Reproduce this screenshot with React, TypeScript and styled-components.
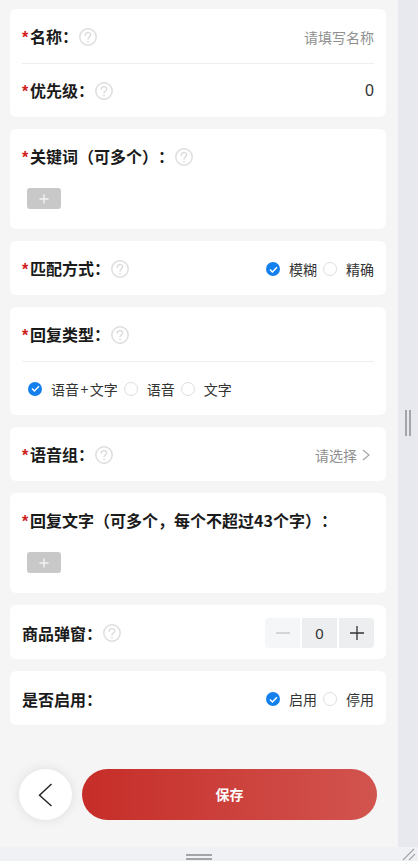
import React from "react";
import styled, { createGlobalStyle } from "styled-components";

const Global = createGlobalStyle`
  html, body { margin: 0; padding: 0; background: #f5f5f6; }
  body {
    font-family: "Noto Sans CJK SC", "Noto Sans", sans-serif;
    color: #1a1a1a;
    text-spacing-trim: space-all;
  }
  * { box-sizing: border-box; }
`;

const Frame = styled.div`
  width: 418px;
  height: 861px;
  display: flex;
  flex-direction: column;
  overflow: hidden;
`;
const Upper = styled.div`
  flex: 1;
  display: flex;
  min-height: 0;
`;
const Main = styled.main`
  width: 398px;
  padding: 9px 12px 0 10px;
  background: #f5f5f6;
  display: flex;
  flex-direction: column;
  gap: 12px;
`;
const SideStrip = styled.div`
  width: 20px;
  background: #e8e9ef;
  display: flex;
  align-items: center;
  justify-content: center;
`;
const VGrip = styled.div`
  width: 6px;
  height: 26px;
  margin-bottom: 1px;
  border-left: 2px solid #a3a4a6;
  border-right: 2px solid #a3a4a6;
`;
const BottomStrip = styled.div`
  height: 14px;
  background: #f0f1f4;
  position: relative;
  display: flex;
  justify-content: center;
`;
const HGrip = styled.div`
  width: 26px;
  height: 6px;
  margin-top: 7px;
  margin-right: 20px;
  border-top: 2px solid #a3a4a6;
  border-bottom: 2px solid #a3a4a6;
`;
const Resize = styled.svg`
  position: absolute;
  right: 2px;
  bottom: 0;
`;
const Card = styled.section`
  background: #fff;
  border-radius: 6px;
  padding: 0 12px;
  display: flex;
  flex-direction: column;
`;
const Row = styled.div<{ $h?: number; $divider?: boolean; $flush?: boolean }>`
  height: ${(p) => p.$h ?? 54}px;
  padding-top: ${(p) => (p.$flush ? 0 : 2)}px;
  display: flex;
  align-items: center;
  justify-content: space-between;
  border-bottom: ${(p) => (p.$divider ? "1px solid #eeeeee" : "none")};
`;
const LabelWrap = styled.div`
  display: flex;
  align-items: center;
  gap: 1px;
`;
const Label = styled.span`
  font-size: 16px;
  font-weight: 700;
  line-height: 22px;
  color: #1a1a1a;
  white-space: nowrap;
`;
const Star = styled.span`
  color: #d0201c;
  font-family: "Liberation Sans", sans-serif;
  display: inline-block;
  width: 8px;
`;
const Placeholder = styled.span`
  font-size: 14px;
  color: #8f8f8f;
`;
const Value = styled.span`
  font-family: "Liberation Sans", sans-serif;
  font-size: 16px;
  color: #333;
`;
const AddButton = styled.button`
  width: 34px;
  height: 21px;
  margin: 5px 0 0 5px;
  padding: 0;
  border: none;
  border-radius: 3px;
  background: #c8c8c8;
  display: flex;
  align-items: center;
  justify-content: center;
`;
const AddBody = styled.div`
  height: 46px;
`;
const RadioGroup = styled.div<{ $pad?: number }>`
  display: flex;
  align-items: center;
  gap: 6px;
  padding-left: ${(p) => p.$pad ?? 0}px;
`;
const RadioOption = styled.div`
  display: flex;
  align-items: center;
`;
const RadioText = styled.span`
  font-size: 14px;
  line-height: 18px;
  color: #333;
  margin-left: 9px;
  white-space: nowrap;
`;
const PlusSign = styled.span`
  padding: 0 1.5px;
`;
const Circle = styled.span<{ $on?: boolean }>`
  width: 14px;
  height: 14px;
  border-radius: 50%;
  flex: none;
  display: flex;
  align-items: center;
  justify-content: center;
  background: ${(p) => (p.$on ? "#1480ee" : "#fff")};
  border: ${(p) => (p.$on ? "none" : "1px solid #dedede")};
`;
const Chevron = styled.svg`
  margin-left: 5px;
`;
const Picker = styled.div`
  display: flex;
  align-items: center;
  padding-right: 4px;
`;
const Stepper = styled.div`
  display: flex;
  gap: 2px;
  border-radius: 4px;
  overflow: hidden;
`;
const StepCell = styled.div<{ $light?: boolean }>`
  width: 35px;
  height: 30px;
  background: ${(p) => (p.$light ? "#f5f6f7" : "#edeeef")};
  display: flex;
  align-items: center;
  justify-content: center;
  font-family: "Liberation Sans", sans-serif;
  font-size: 15px;
  color: #333;
`;
const Footer = styled.div`
  margin-top: 32px;
  padding-left: 9px;
  display: flex;
  align-items: center;
  gap: 10px;
`;
const BackButton = styled.button`
  width: 53px;
  height: 51px;
  border: none;
  padding: 0;
  border-radius: 50%;
  background: #fff;
  box-shadow: 0 0 12px rgba(0, 0, 0, 0.1);
  display: flex;
  align-items: center;
  justify-content: center;
  flex: none;
`;
const SaveButton = styled.button`
  width: 295px;
  height: 51px;
  border: none;
  padding: 0 0 2px;
  border-radius: 26px;
  background: linear-gradient(90deg, #c62d28, #d2544f);
  color: #fff;
  font-family: "Noto Sans CJK SC", sans-serif;
  font-size: 14px;
  font-weight: 700;
`;

const Help = () => (
  <svg width="18" height="18" viewBox="0 0 18 18" fill="none">
    <circle cx="9" cy="9" r="8.2" stroke="#dcdcdc" strokeWidth="1.4" />
    <path d="M6.3 7.2c0-1.5 1.1-2.6 2.7-2.6s2.7 1 2.7 2.4c0 2-2.7 2-2.7 4.1" stroke="#dcdcdc" strokeWidth="1.4" strokeLinecap="round" />
    <circle cx="9" cy="13.6" r="0.95" fill="#dcdcdc" />
  </svg>
);

const Title = ({ text, star = true, help = true }: { text: string; star?: boolean; help?: boolean }) => (
  <LabelWrap>
    <Label>
      {star && <Star>*</Star>}
      {text}
    </Label>
    {help && <Help />}
  </LabelWrap>
);

const Radio = ({ on, children }: { on?: boolean; children: React.ReactNode }) => (
  <RadioOption>
    <Circle $on={on}>
      {on && (
        <svg width="9" height="7" viewBox="0 0 9 7" fill="none">
          <path d="M1 3.6 3.4 6 8 1.2" stroke="#fff" strokeWidth="1.4" />
        </svg>
      )}
    </Circle>
    <RadioText>{children}</RadioText>
  </RadioOption>
);

const PlusSmall = () => (
  <svg width="10" height="10" viewBox="0 0 10 10">
    <path d="M5 .5v9M.5 5h9" stroke="#f2f2f2" strokeWidth="1.4" />
  </svg>
);

export default function App() {
  return (
    <Frame>
      <Global />
      <Upper>
        <Main>
          <Card>
            <Row $divider $h={55}>
              <Title text="名称：" />
              <Placeholder>请填写名称</Placeholder>
            </Row>
            <Row $h={53} $flush>
              <Title text="优先级：" />
              <Value>0</Value>
            </Row>
          </Card>
          <Card>
            <Row>
              <Title text="关键词（可多个）：" />
            </Row>
            <AddBody>
              <AddButton aria-label="add">
                <PlusSmall />
              </AddButton>
            </AddBody>
          </Card>
          <Card>
            <Row>
              <Title text="匹配方式：" />
              <RadioGroup>
                <Radio on>模糊</Radio>
                <Radio>精确</Radio>
              </RadioGroup>
            </Row>
          </Card>
          <Card>
            <Row $divider $h={55}>
              <Title text="回复类型：" />
            </Row>
            <Row $h={53} $flush>
              <RadioGroup $pad={6}>
                <Radio on>语音<PlusSign>+</PlusSign>文字</Radio>
                <Radio>语音</Radio>
                <Radio>文字</Radio>
              </RadioGroup>
            </Row>
          </Card>
          <Card>
            <Row>
              <Title text="语音组：" />
              <Picker>
                <Placeholder>请选择</Placeholder>
                <Chevron width="8" height="12" viewBox="0 0 8 12" fill="none">
                  <path d="M1 1l6 5-6 5" stroke="#a6a6a6" strokeWidth="1.2" />
                </Chevron>
              </Picker>
            </Row>
          </Card>
          <Card>
            <Row>
              <Title text="回复文字（可多个，每个不超过43个字）：" help={false} />
            </Row>
            <AddBody>
              <AddButton aria-label="add">
                <PlusSmall />
              </AddButton>
            </AddBody>
          </Card>
          <Card>
            <Row>
              <Title text="商品弹窗：" star={false} />
              <Stepper>
                <StepCell $light>
                  <svg width="14" height="2" viewBox="0 0 14 2"><path d="M0 1h14" stroke="#c9cacb" strokeWidth="1.4" /></svg>
                </StepCell>
                <StepCell>0</StepCell>
                <StepCell>
                  <svg width="14" height="14" viewBox="0 0 14 14"><path d="M7 0v14M0 7h14" stroke="#333" strokeWidth="1.3" /></svg>
                </StepCell>
              </Stepper>
            </Row>
          </Card>
          <Card>
            <Row>
              <Title text="是否启用：" star={false} help={false} />
              <RadioGroup>
                <Radio on>启用</Radio>
                <Radio>停用</Radio>
              </RadioGroup>
            </Row>
          </Card>
          <Footer>
            <BackButton aria-label="back">
              <svg width="15" height="24" viewBox="0 0 15 24" fill="none">
                <path d="M13.5 1 1.5 12.2 13.5 23" stroke="#222" strokeWidth="1.4" />
              </svg>
            </BackButton>
            <SaveButton>保存</SaveButton>
          </Footer>
        </Main>
        <SideStrip>
          <VGrip />
        </SideStrip>
      </Upper>
      <BottomStrip>
        <HGrip />
        <Resize width="14" height="14" viewBox="0 0 14 14" fill="none">
          <path d="M1 13 12 2M7 13l6-6" stroke="#a3a4a6" strokeWidth="1.1" />
        </Resize>
      </BottomStrip>
    </Frame>
  );
}
